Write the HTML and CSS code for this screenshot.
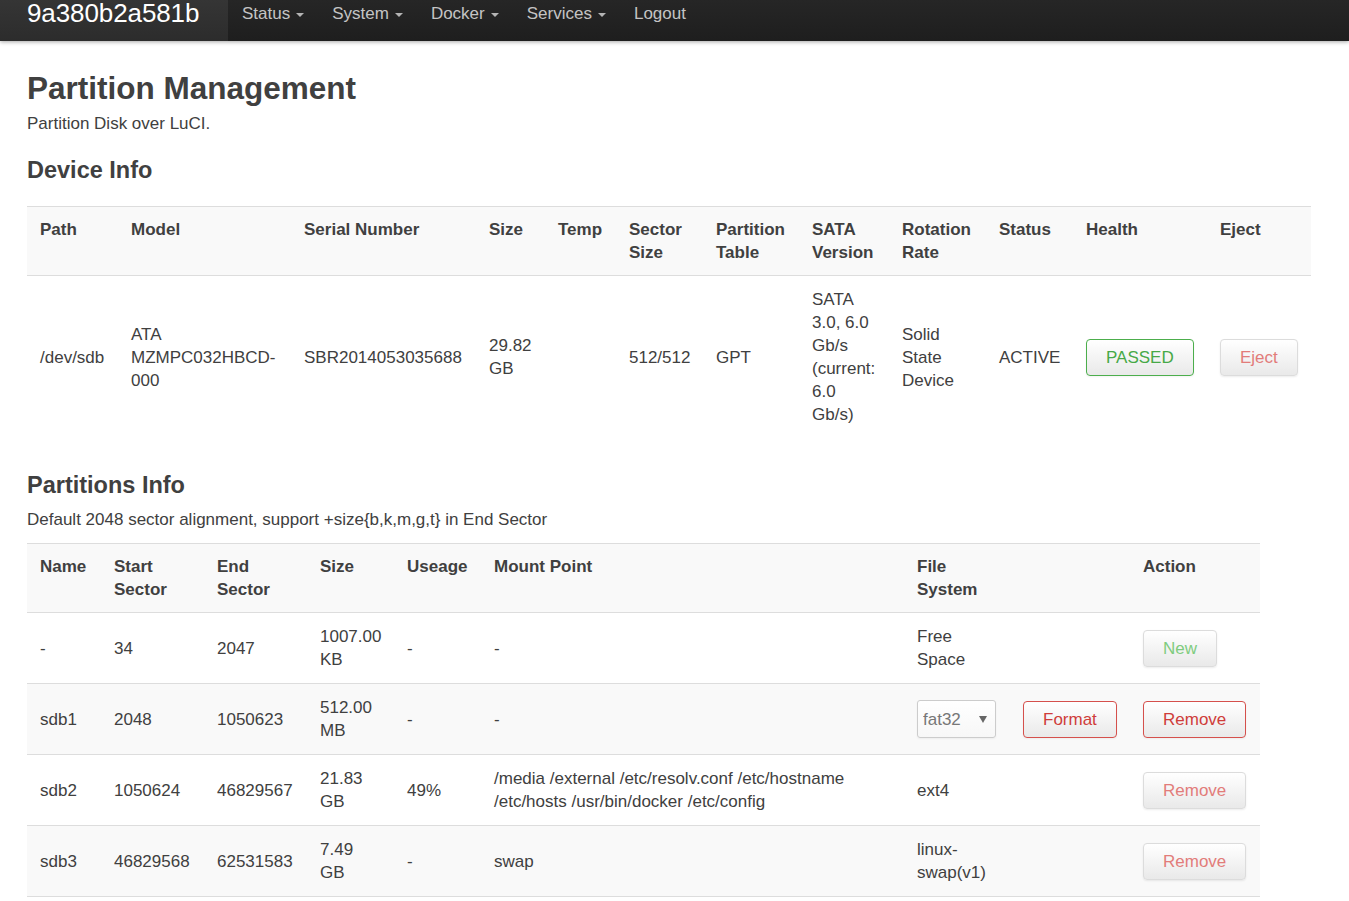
FILE: index.html
```html
<!DOCTYPE html>
<html>
<head>
<meta charset="utf-8">
<title>Partition Management</title>
<link rel="stylesheet" href="styles.css">
</head>
<body>
<header class="navbar">
  <a class="brand">9a380b2a581b</a>
  <nav class="nav">
    <a class="nav-link">Status<span class="caret"></span></a>
    <a class="nav-link">System<span class="caret"></span></a>
    <a class="nav-link">Docker<span class="caret"></span></a>
    <a class="nav-link">Services<span class="caret"></span></a>
    <a class="nav-link">Logout</a>
  </nav>
</header>

<main class="main">
  <h2 class="page-title">Partition Management</h2>
  <p class="page-desc">Partition Disk over LuCI.</p>

  <h3 class="section-title first">Device Info</h3>
  <table class="table device-table">
    <colgroup>
      <col class="w92"><col class="w173"><col class="w185"><col class="w69"><col class="w71"><col class="w87"><col class="w96"><col class="w90"><col class="w97"><col class="w87"><col class="w134"><col class="w103">
    </colgroup>
    <thead>
      <tr>
        <th class="first-col">Path</th><th>Model</th><th>Serial Number</th><th>Size</th><th>Temp</th><th>Sector Size</th><th>Partition Table</th><th>SATA Version</th><th>Rotation Rate</th><th>Status</th><th>Health</th><th>Eject</th>
      </tr>
    </thead>
    <tbody>
      <tr>
        <td class="first-col">/dev/sdb</td>
        <td>ATA MZMPC032HBCD-000</td>
        <td>SBR2014053035688</td>
        <td>29.82 GB</td>
        <td></td>
        <td>512/512</td>
        <td>GPT</td>
        <td>SATA 3.0, 6.0 Gb/s (current: 6.0 Gb/s)</td>
        <td>Solid State Device</td>
        <td>ACTIVE</td>
        <td><button class="btn btn-apply">PASSED</button></td>
        <td><button class="btn btn-remove disabled">Eject</button></td>
      </tr>
    </tbody>
  </table>

  <h3 class="section-title second">Partitions Info</h3>
  <p class="section-desc">Default 2048 sector alignment, support +size{b,k,m,g,t} in End Sector</p>
  <table class="table part-table">
    <colgroup>
      <col class="w74"><col class="w103"><col class="w103"><col class="w87"><col class="w87"><col class="w423"><col class="w106"><col class="w120"><col class="w130">
    </colgroup>
    <thead>
      <tr>
        <th>Name</th><th>Start Sector</th><th>End Sector</th><th class="size">Size</th><th>Useage</th><th>Mount Point</th><th>File System</th><th></th><th>Action</th>
      </tr>
    </thead>
    <tbody>
      <tr>
        <td>-</td><td>34</td><td>2047</td><td class="size">1007.00 KB</td><td>-</td><td>-</td><td>Free Space</td><td></td>
        <td><button class="btn btn-apply disabled">New</button></td>
      </tr>
      <tr class="stripe">
        <td>sdb1</td><td>2048</td><td>1050623</td><td class="size">512.00 MB</td><td>-</td><td>-</td>
        <td><span class="select-wrap"><select class="select"><option>fat32</option></select></span></td>
        <td><button class="btn btn-remove">Format</button></td>
        <td><button class="btn btn-remove">Remove</button></td>
      </tr>
      <tr>
        <td>sdb2</td><td>1050624</td><td>46829567</td><td class="size">21.83 GB</td><td>49%</td><td>/media /external /etc/resolv.conf /etc/hostname /etc/hosts /usr/bin/docker /etc/config</td><td>ext4</td><td></td>
        <td><button class="btn btn-remove disabled">Remove</button></td>
      </tr>
      <tr class="stripe">
        <td>sdb3</td><td>46829568</td><td>62531583</td><td class="size">7.49 GB</td><td>-</td><td>swap</td><td>linux-swap(v1)</td><td></td>
        <td><button class="btn btn-remove disabled">Remove</button></td>
      </tr>
    </tbody>
  </table>
</main>
</body>
</html>
```

FILE: styles.css
```css
* { box-sizing: border-box; }

html, body {
  margin: 0;
  padding: 0;
  background: #fff;
}

body {
  font-family: "Liberation Sans", Arial, sans-serif;
  font-size: 17px;
  line-height: 23px;
  color: #404040;
  overflow: hidden;
}

/* Navbar */
.navbar {
  display: flex;
  align-items: stretch;
  height: 41px;
  background: linear-gradient(#262626, #1e1e1e);
  box-shadow: 0 1px 4px rgba(0, 0, 0, 0.35);
  position: relative;
  z-index: 2;
}

.brand {
  display: block;
  width: 228px;
  padding: 0 27px;
  font-size: 26px;
  line-height: 27px;
  color: #fff;
  background: linear-gradient(#353535, #2c2c2c);
  letter-spacing: -0.1px;
}

.nav {
  display: flex;
  align-items: flex-start;
}

.nav-link {
  display: flex;
  align-items: center;
  padding: 0 14px;
  height: 27px;
  font-size: 17px;
  color: #c4c4c4;
}

.caret {
  display: inline-block;
  width: 0;
  height: 0;
  margin-left: 6px;
  margin-top: 2px;
  border-top: 4px solid #b4b4b4;
  border-left: 4px solid transparent;
  border-right: 4px solid transparent;
}

/* Main */
.main {
  padding: 29px 38px 0 27px;
}

.page-title {
  margin: 0;
  font-size: 31.5px;
  line-height: 36px;
  font-weight: bold;
}

.page-desc {
  margin: 6px 0 0;
}

.section-title {
  margin: 0;
  font-size: 23.5px;
  line-height: 28px;
  font-weight: bold;
}

.section-title.first { margin-top: 21px; }
.section-title.second { margin-top: 33px; }

.section-desc {
  margin: 9px 0 0;
}

/* Tables */
.table {
  border-collapse: collapse;
  border-spacing: 0;
  table-layout: fixed;
}

.device-table { width: 1284px; margin-top: 22px; }
.part-table { width: 1233px; margin-top: 12px; }

.table th,
.table td {
  border-top: 1px solid #dddddd;
  text-align: left;
  vertical-align: middle;
}

.table th {
  padding: 11px 12px;
  font-weight: bold;
  background: #f9f9f9;
  vertical-align: top;
}

.table td {
  padding: 12px 12px;
}

.device-table .first-col { padding-left: 13px; padding-right: 11px; }

.part-table th,
.part-table td {
  padding-left: 13px;
  padding-right: 11px;
}

.part-table tr.stripe td { background: #f9f9f9; }
.part-table tbody tr:last-child td { border-bottom: 1px solid #dddddd; }

.part-table .size { padding-right: 12px; }

.w69 { width: 69px; }
.w71 { width: 71px; }
.w74 { width: 74px; }
.w87 { width: 87px; }
.w90 { width: 90px; }
.w92 { width: 92px; }
.w96 { width: 96px; }
.w97 { width: 97px; }
.w103 { width: 103px; }
.w106 { width: 106px; }
.w120 { width: 120px; }
.w130 { width: 130px; }
.w134 { width: 134px; }
.w173 { width: 173px; }
.w185 { width: 185px; }
.w423 { width: 423px; }

/* Buttons */
.btn {
  display: inline-block;
  height: 37px;
  padding: 0 19px;
  font-family: "Liberation Sans", Arial, sans-serif;
  font-size: 17px;
  line-height: 35px;
  border: 1px solid #cccccc;
  border-radius: 4px;
  background: linear-gradient(#ffffff, #e9e9e9);
  box-shadow: inset 0 1px 0 rgba(255, 255, 255, 0.2), 0 1px 2px rgba(0, 0, 0, 0.05);
  cursor: pointer;
}

.btn-apply {
  color: #47a947;
  border-color: #4cae4c;
}

.btn-remove {
  color: #cf3d3a;
  border-color: #d5504c;
}

.btn.disabled {
  border-color: #dcdcdc;
  box-shadow: 0 1px 2px rgba(0, 0, 0, 0.08);
}

.btn-apply.disabled { color: #7fcc7f; }
.btn-remove.disabled { color: #e27c7a; }

/* Select */
.select-wrap {
  position: relative;
  display: inline-block;
}

.select-wrap::after {
  content: "";
  position: absolute;
  right: 9px;
  top: 16px;
  border-top: 7px solid #666;
  border-left: 4px solid transparent;
  border-right: 4px solid transparent;
  pointer-events: none;
}

.select {
  -webkit-appearance: none;
  appearance: none;
  width: 79px;
  height: 38px;
  padding: 0 20px 0 5px;
  font-family: "Liberation Sans", Arial, sans-serif;
  font-size: 17px;
  color: #777;
  border: 1px solid #cccccc;
  border-radius: 3px;
  background: linear-gradient(#ffffff, #f7f7f7);
  box-shadow: 0 1px 2px rgba(0, 0, 0, 0.05);
}
```
